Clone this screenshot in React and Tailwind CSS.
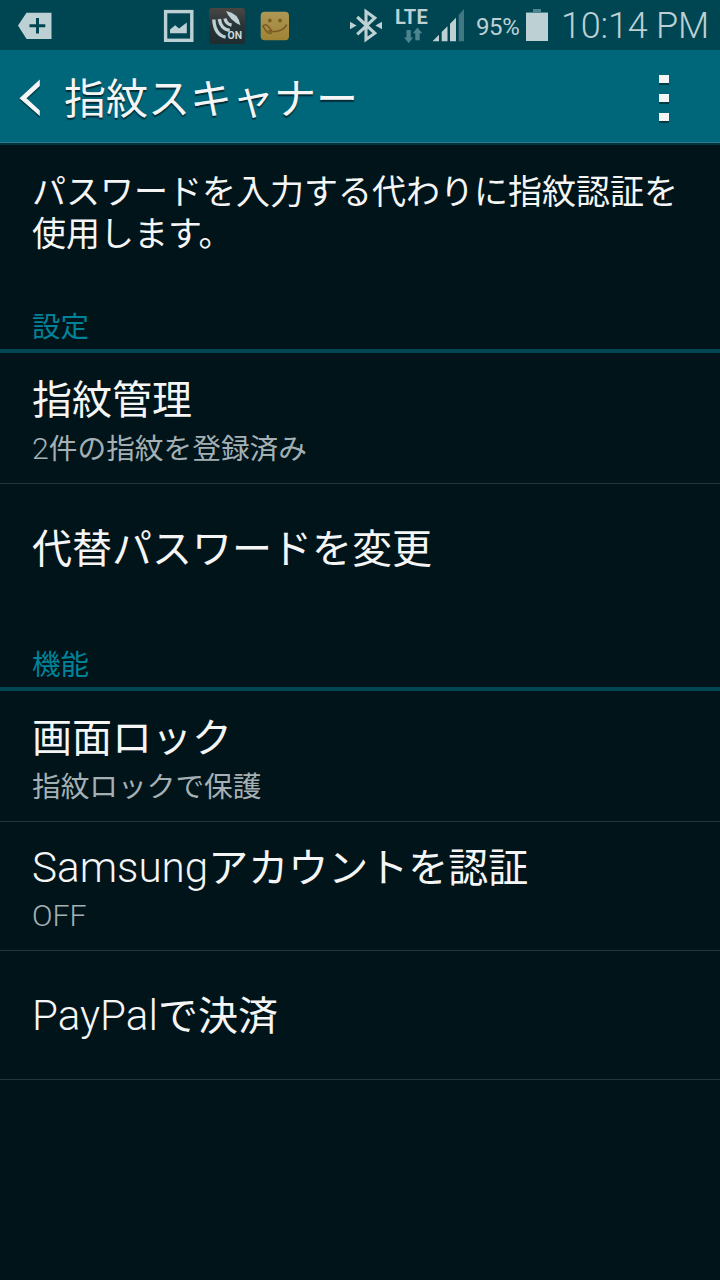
import React from 'react';

const TagPlusIcon = () => (
    <svg className="ml-[18px] w-[34px] h-[50px] shrink-0" viewBox="18 0 34 50">
        <path d="M18 25.5 26.5 12.7H51.5V39H26.5Z" fill="#bdd0d4" />
        <path d="M37.5 18V33.5M29.5 25.7H45.3" stroke="#004652" strokeWidth="3" />
    </svg>
);

const GalleryIcon = () => (
    <svg className="ml-[111px] w-[32px] h-[50px] shrink-0" viewBox="163 0 32 50">
        <rect x="165.6" y="11.6" width="26.2" height="28.7" fill="none" stroke="#bdd0d4" strokeWidth="3.4" />
        <path d="M170 33.2V29.5L175.2 25.3 179 28.5 186.8 22.5V33.2Z" fill="#bdd0d4" />
    </svg>
);

const NfcIcon = () => (
    <svg className="ml-[13px] w-[38px] h-[50px] shrink-0" viewBox="208 0 38 50">
        <defs>
            <linearGradient id="nfc" x1="0" y1="0" x2="0" y2="1">
                <stop offset="0" stopColor="#4a4644" />
                <stop offset="0.5" stopColor="#263437" />
                <stop offset="1" stopColor="#1f2d30" />
            </linearGradient>
        </defs>
        <rect x="209" y="8" width="36" height="36" rx="3" fill="url(#nfc)" />
        <path d="M226 11Q238.5 13 240.4 25.3Q230 20.5 226 11Z" fill="#bdd0d4" />
        <g fill="none" stroke="#bdd0d4" strokeWidth="3.4">
            <path d="M213.8 19.5C214.3 29.5 218.5 35.6 225.6 37.2" />
            <path d="M219.4 19C220 25.5 224 29.8 229.8 30.4" />
            <path d="M225 18.5C225.8 22.3 228 24.6 231.6 25" />
        </g>
        <text x="227.5" y="39" fontSize="11.5" fontWeight="700" fontFamily="Roboto, sans-serif" fill="#cbd8db" textLength="14.5" lengthAdjust="spacingAndGlyphs">ON</text>
    </svg>
);

const SmileIcon = () => (
    <svg className="ml-[14px] w-[30px] h-[50px] shrink-0" viewBox="260 0 30 50">
        <defs>
            <linearGradient id="smile" x1="0" y1="0" x2="0" y2="1">
                <stop offset="0" stopColor="#ad9855" />
                <stop offset="1" stopColor="#a08334" />
            </linearGradient>
        </defs>
        <rect x="260.7" y="11.8" width="28.3" height="28.4" rx="4" fill="url(#smile)" />
        <circle cx="269.8" cy="20.5" r="1.9" fill="#7d5c24" />
        <circle cx="280" cy="20.5" r="1.9" fill="#7d5c24" />
        <path d="M263 26C265 23.5 267.5 25 270 28.5C272.5 31.6 272 33.4 270 33.4C266.5 33.4 265 29.5 263 26M268.5 30.8C276 32.8 283.5 30.5 286.5 25" fill="none" stroke="#7d5c24" strokeWidth="1.6" strokeLinecap="round" />
    </svg>
);

const BluetoothIcon = () => (
    <svg className="ml-[59px] w-[34px] h-[50px] shrink-0" viewBox="349 0 34 50">
        <path d="M357.2 17 374.8 33.2 366 39.5V11.5L374.8 18 357.2 34.3" fill="none" stroke="#bdd0d4" strokeWidth="3.1" />
        <path d="M350 21.8 356.6 25.5 350 29.2ZM382 21.8 375.4 25.5 382 29.2Z" fill="#bdd0d4" />
    </svg>
);

const NetworkType = () => (
    <div className="ml-[12px] w-[36px] h-[50px] shrink-0 pt-[7px]">
        <div className="h-[20px] text-[20px] leading-[20px] font-bold tracking-[0.2px]">LTE</div>
        <svg className="ml-[8px] w-[20px] h-[16px]" viewBox="403 27 20 16">
            <path d="M406.5 30H410.8V37.5H413.2L408.7 43 404 37.5H406.5ZM415.3 40.3H419.7V33.2H422.2L417.5 27.6 412.8 33.2H415.3Z" fill="#4d858f" />
        </svg>
    </div>
);

const SignalIcon = () => (
    <svg className="ml-[1px] w-[33px] h-[50px] shrink-0" viewBox="432 0 33 50">
        <path d="M432.5 41.3 439 34.7V41.3ZM441.7 32 447.5 26.2V41.3H441.7ZM450 23.7 456 17.7V41.3H450Z" fill="#bdd0d4" />
        <path d="M458.7 15 464 9V41.3H458.7Z" fill="#3f7782" />
    </svg>
);

const BatteryIcon = () => (
    <svg className="w-[24px] h-[50px] shrink-0" viewBox="525 0 24 50">
        <path d="M533 9H541V12H548V15H526V12H533Z" fill="#4d858f" />
        <path d="M526 13H548V41H526Z" fill="#bdd0d4" />
    </svg>
);

const StatusBar = () => (
    <div className="flex items-center h-[50px] bg-[#004652] text-[#bdd0d4] font-light overflow-hidden">
        <TagPlusIcon />
        <GalleryIcon />
        <NfcIcon />
        <SmileIcon />
        <BluetoothIcon />
        <NetworkType />
        <SignalIcon />
        <span className="ml-[11px] w-[49px] shrink-0 pt-[3px] text-[24px] leading-[50px] font-normal tracking-[-0.4px] whitespace-nowrap">95%</span>
        <BatteryIcon />
        <span className="ml-[12px] pt-[2px] text-[36px] leading-[50px] tracking-[-0.2px] whitespace-nowrap">10:14 PM</span>
    </div>
);

const ActionBar = () => (
    <div className="flex items-center h-[95px] bg-[#006679] border-b-2 border-[#00323c] shadow-[inset_0_-1px_0_#2b7f8d]">
        <svg className="ml-[18px] mt-[2px] w-[24px] h-[44px] shrink-0 drop-shadow-[0_2px_0_rgba(0,40,50,0.6)]" viewBox="18 76 24 44">
            <path d="M39.8 79.5V86L26.5 98.2 39.8 110.5V116L19.5 98.2Z" fill="#f5f5f5" />
        </svg>
        <h1 className="ml-[22px] flex-1 pt-[6px] text-[42px] leading-[60px] text-[#f5f5f5] [text-shadow:0_2px_1px_rgba(0,30,40,0.8)]">指紋スキャナー</h1>
        <div className="flex flex-col gap-[11px] mr-[51px] mt-[3px]">
            {[0, 1, 2].map((dot) => (
                <span key={dot} className="block w-[10px] h-[8px] bg-[#f5f5f5] shadow-[0_2px_0_rgba(0,40,50,0.7)]" />
            ))}
        </div>
    </div>
);

const SectionHeader = ({ label, className }) => (
    <h2 className={`${className} pl-[32px] border-b-4 border-[#004652] text-[28.5px] leading-[44px] text-[#008299]`}>{label}</h2>
);

// Latin text is lighter and slightly larger than the kana and kanji beside it
const Latin = ({ children }) => <span className="text-[1.055em] font-light">{children}</span>;

const Row = ({ title, summary, className }) => (
    <div className={`${className} flex flex-col justify-center pl-[32px] border-[#263539]`}>
        <div className="h-[48px] text-[40px] leading-[48px] text-[#f5f5f5]">{title}</div>
        {summary && <div className="h-[48px] text-[28.7px] leading-[48px] text-[#a4b0b4]">{summary}</div>}
    </div>
);

const App = () => (
    <div
        lang="ja"
        className="w-[720px] h-[1280px] overflow-hidden bg-[#00141a] font-normal font-[Roboto,'Noto_Sans_CJK_JP',sans-serif]"
    >
        <StatusBar />
        <ActionBar />
        <p className="h-[160px] pt-[26px] pl-[32px] text-[34px] leading-[42px] text-[#f5f5f5]">
            パスワードを入力する代わりに指紋認証を
            <br />
            使用します。
        </p>
        <SectionHeader label="設定" className="h-[48px] pt-px" />
        <Row title="指紋管理" summary={<><Latin>2</Latin>件の指紋を登録済み</>} className="h-[131px] pt-[14px] border-b" />
        <Row title="代替パスワードを変更" className="h-[129px] pt-[2px]" />
        <SectionHeader label="機能" className="h-[78px] pt-[31px]" />
        <Row title="画面ロック" summary="指紋ロックで保護" className="h-[131px] pt-[14px] border-b" />
        <Row title={<><Latin>Samsung</Latin>アカウントを認証</>} summary={<Latin>OFF</Latin>} className="h-[129px] pt-[11px] border-b" />
        <Row title={<><Latin>PayPal</Latin>で決済</>} className="h-[129px] pt-[2px] border-b" />
    </div>
);

export default App;
